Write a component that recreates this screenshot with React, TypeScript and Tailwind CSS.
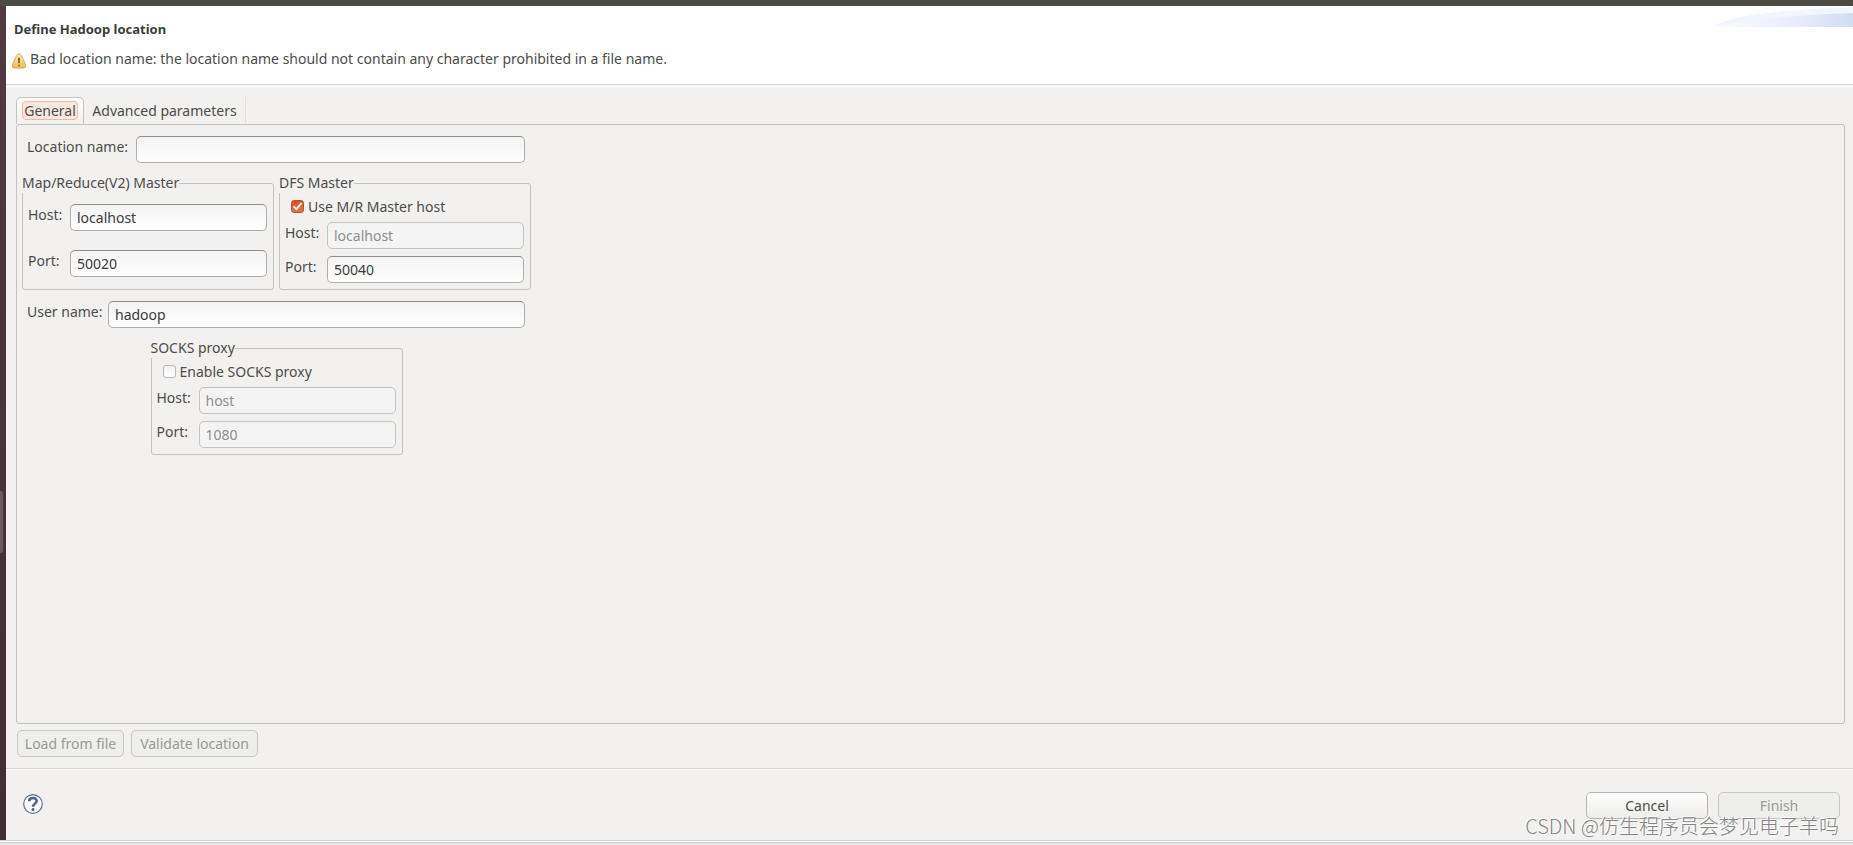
import type { ReactNode } from "react";

const inputClass =
  "h-[27px] min-w-0 rounded-[5px] border border-[#adadab] border-t-[#8f8f8d] bg-linear-to-b from-[#f3f3f3] to-white px-1.5 text-[#3c3c3c] outline-none disabled:border-[#c4c4c2] disabled:bg-[#f4f4f4] disabled:bg-none disabled:text-[#8f8f8c]";

const buttonClass =
  "h-[27px] rounded-[5px] border border-[#b4b4b1] bg-linear-to-b from-white to-[#eeedeb] text-center disabled:border-[#c8c8c6] disabled:bg-[#eeeeed] disabled:bg-none disabled:text-[#9a9a97]";

type FieldProps = {
  id: string;
  label: string;
  value?: string;
  disabled?: boolean;
  labelClass?: string;
};

function Field({ id, label, value = "", disabled, labelClass = "w-[42px]" }: FieldProps) {
  return (
    <div className="flex items-start">
      <label htmlFor={id} className={`${labelClass} shrink-0 leading-[22px] whitespace-nowrap`}>
        {label}
      </label>
      <input id={id} type="text" defaultValue={value} disabled={disabled} className={`${inputClass} flex-1`} />
    </div>
  );
}

function Group({ title, children }: { title: string; children: ReactNode }) {
  return (
    <fieldset className="w-[252px] min-w-0 rounded-[3px] border border-[#c3c3c1] pr-1.5 pb-1.5 pl-[5px]">
      <legend className="-ml-1.5 bg-[#f2f1ef] leading-5">{title}</legend>
      {children}
    </fieldset>
  );
}

function Check({ id, label, checked }: { id: string; label: string; checked?: boolean }) {
  return (
    <div className="flex h-[29px] items-center gap-1 pb-0.5 pl-1.5">
      <span className="grid size-[13px] place-items-center">
        <input
          id={id}
          type="checkbox"
          defaultChecked={checked}
          className="peer col-start-1 row-start-1 size-[13px] appearance-none rounded-[3px] border border-[#b7b7b5] bg-linear-to-b from-[#f3f3f3] to-white checked:border-[#ba4f2b] checked:from-[#cf5229] checked:to-[#e3764f]"
        />
        <svg
          viewBox="0 0 13 13"
          className="pointer-events-none invisible col-start-1 row-start-1 size-[13px] peer-checked:visible"
          fill="none"
          stroke="#fff"
          strokeWidth="1.8"
        >
          <path d="M2.6 6.4 5.3 9.2 10.7 2.9" />
        </svg>
      </span>
      <label htmlFor={id}>{label}</label>
    </div>
  );
}

function WarningIcon() {
  return (
    <svg viewBox="0 0 15 16" className="h-4 w-[15px] shrink-0">
      <defs>
        <linearGradient id="warn" x1="0" y1="0" x2="0" y2="1">
          <stop offset="0" stopColor="#fdf0b8" />
          <stop offset="1" stopColor="#eeb94e" />
        </linearGradient>
      </defs>
      <path
        d="M7 1 C8.2 1 8.9 1.7 9.5 2.8 L12.9 10 C14.3 13.4 13.6 15 11.8 15 H2.2 C.4 15 -.3 13.4 1.1 10 L4.5 2.8 C5.1 1.7 5.8 1 7 1 Z"
        fill="url(#warn)"
        stroke="#d9a566"
      />
      <path d="M6.1 4.8 H7.9 L7.6 10.2 H6.4 Z" fill="#6b4a1d" />
      <rect x="6.2" y="11.6" width="1.6" height="1.6" fill="#8a632d" />
    </svg>
  );
}

function HeaderSwoosh() {
  return (
    <svg viewBox="0 0 139 20" className="h-5 w-[139px]">
      <defs>
        <linearGradient id="swoosh" x1="0" x2="1">
          <stop offset="0" stopColor="#fbfcfe" />
          <stop offset="0.55" stopColor="#ebeefa" />
          <stop offset="1" stopColor="#d3dcf5" />
        </linearGradient>
      </defs>
      <path d="M0 20 C14 7 75 3 139 0 V20 Z" fill="#f1f5fd" />
      <path d="M0 20 C30 13 80 8 139 6 V20 Z" fill="url(#swoosh)" />
    </svg>
  );
}

function HelpIcon() {
  return (
    <svg viewBox="0 0 20 20" className="size-5" fill="none">
      <circle cx="10" cy="10" r="9.3" fill="#f8f8f9" stroke="#61718f" strokeWidth="1.2" />
      <path d="M6.2 7.3 C6.2 3 13.7 3 13.7 7 C13.7 9.6 10 9.7 10 12.8" stroke="#4d5f86" strokeWidth="2.5" />
      <circle cx="10" cy="15.6" r="1.5" fill="#4d5f86" />
    </svg>
  );
}

export default function App() {
  return (
    <div className="flex min-h-screen flex-col bg-[#f2f1ef] font-['Noto_Sans',sans-serif] text-sm text-[#4c4c4c]">
      <div className="h-1.5 bg-[#4c4a43]" />

      <div className="flex flex-1">
        {/* Desktop edge showing beside the dialog */}
        <div className="flex w-1.5 flex-col justify-center bg-linear-to-b from-[#523a41] via-[#47333a] to-[#412e35] pt-[198px]">
          <div className="h-[62px] w-[3px] rounded-r-sm bg-[#6b595f]" />
        </div>

        <main className="flex min-w-0 flex-1 flex-col">
          <header className="flex h-[79px] justify-between border-b border-[#d9d9d9] bg-white">
            <div className="pt-[13px] pl-1.5">
              <h1 className="pl-0.5 text-[13px] leading-5 font-bold text-[#3c3c3c]">Define Hadoop location</h1>
              <div className="mt-[9px] flex items-start gap-[3px]">
                <span className="pt-[5px]">
                  <WarningIcon />
                </span>
                <p className="leading-[22px]">
                  Bad location name: the location name should not contain any character prohibited in a file name.
                </p>
              </div>
            </div>
            <div className="pt-px">
              <HeaderSwoosh />
            </div>
          </header>
          <div className="mt-px h-px bg-white" />

          <div className="flex flex-1 flex-col px-2.5 pt-2.5 pr-2">
            <div role="tablist" className="flex h-[27px]">
              <button
                role="tab"
                aria-selected="true"
                className="w-[68px] rounded-t-[5px] border border-b-0 border-[#c3c3c1] bg-linear-to-b from-white to-[#f2f1ef] px-[5px] pb-0.5"
              >
                <span className="block rounded-[4px] border border-[#f3b8a1] bg-[#f9e8e2] text-center leading-[17px]">
                  General
                </span>
              </button>
              <button role="tab" aria-selected="false" className="w-[162px] border-r border-[#e2e1df] text-center">
                Advanced parameters
              </button>
            </div>

            <section className="flex-1 rounded-[3px] border border-[#c3c3c1] px-[5px] pt-[11px]">
              <form className="w-[509px]">
                <div className="pr-1.5 pl-[5px]">
                  <Field id="location" label="Location name:" labelClass="w-[109px]" />
                </div>
                <div className="mt-2.5 flex justify-between">
                  <Group title="Map/Reduce(V2) Master">
                    <div className="flex flex-col gap-[19px] pt-[11px]">
                      <Field id="mr-host" label="Host:" value="localhost" />
                      <Field id="mr-port" label="Port:" value="50020" />
                    </div>
                  </Group>
                  <Group title="DFS Master">
                    <Check id="use-master" label="Use M/R Master host" checked />
                    <div className="flex flex-col gap-[7px]">
                      <Field id="dfs-host" label="Host:" value="localhost" disabled />
                      <Field id="dfs-port" label="Port:" value="50040" />
                    </div>
                  </Group>
                </div>
                <div className="mt-[11px] pr-1.5 pl-[5px]">
                  <Field id="user" label="User name:" value="hadoop" labelClass="w-[81px]" />
                </div>
                <div className="mt-2.5 flex justify-center">
                  <Group title="SOCKS proxy">
                    <Check id="enable-socks" label="Enable SOCKS proxy" />
                    <div className="flex flex-col gap-[7px]">
                      <Field id="socks-host" label="Host:" value="host" disabled />
                      <Field id="socks-port" label="Port:" value="1080" disabled />
                    </div>
                  </Group>
                </div>
              </form>
            </section>

            <div className="flex gap-[7px] px-px pt-1.5 pb-[11px]">
              <button disabled className={`${buttonClass} w-[107px]`}>
                Load from file
              </button>
              <button disabled className={`${buttonClass} w-[127px]`}>
                Validate location
              </button>
            </div>
          </div>

          <footer className="relative flex h-[72px] items-start justify-between border-t border-[#d9d9d9] pr-[13px] pl-[17px] shadow-[inset_0_1px_0_#fafafa]">
            <button aria-label="Help" className="mt-[25px]">
              <HelpIcon />
            </button>
            <div className="mt-[23px] flex gap-2.5">
              <button className={`${buttonClass} w-[122px]`}>Cancel</button>
              <button disabled className={`${buttonClass} w-[122px]`}>
                Finish
              </button>
            </div>
            <span className="pointer-events-none absolute right-3.5 bottom-0 font-['Noto_Sans_CJK_SC',sans-serif] text-xl leading-7 font-light text-[#858585] [text-shadow:-1px_-1px_0_#fff]">
              CSDN @仿生程序员会梦见电子羊吗
            </span>
          </footer>
        </main>
      </div>

      <div className="h-[5px] border-t border-[#d4d4d4] bg-[#e9e9e9]">
        <div className="h-0.5 border-b border-[#cfcfcf] bg-white" />
      </div>
    </div>
  );
}
